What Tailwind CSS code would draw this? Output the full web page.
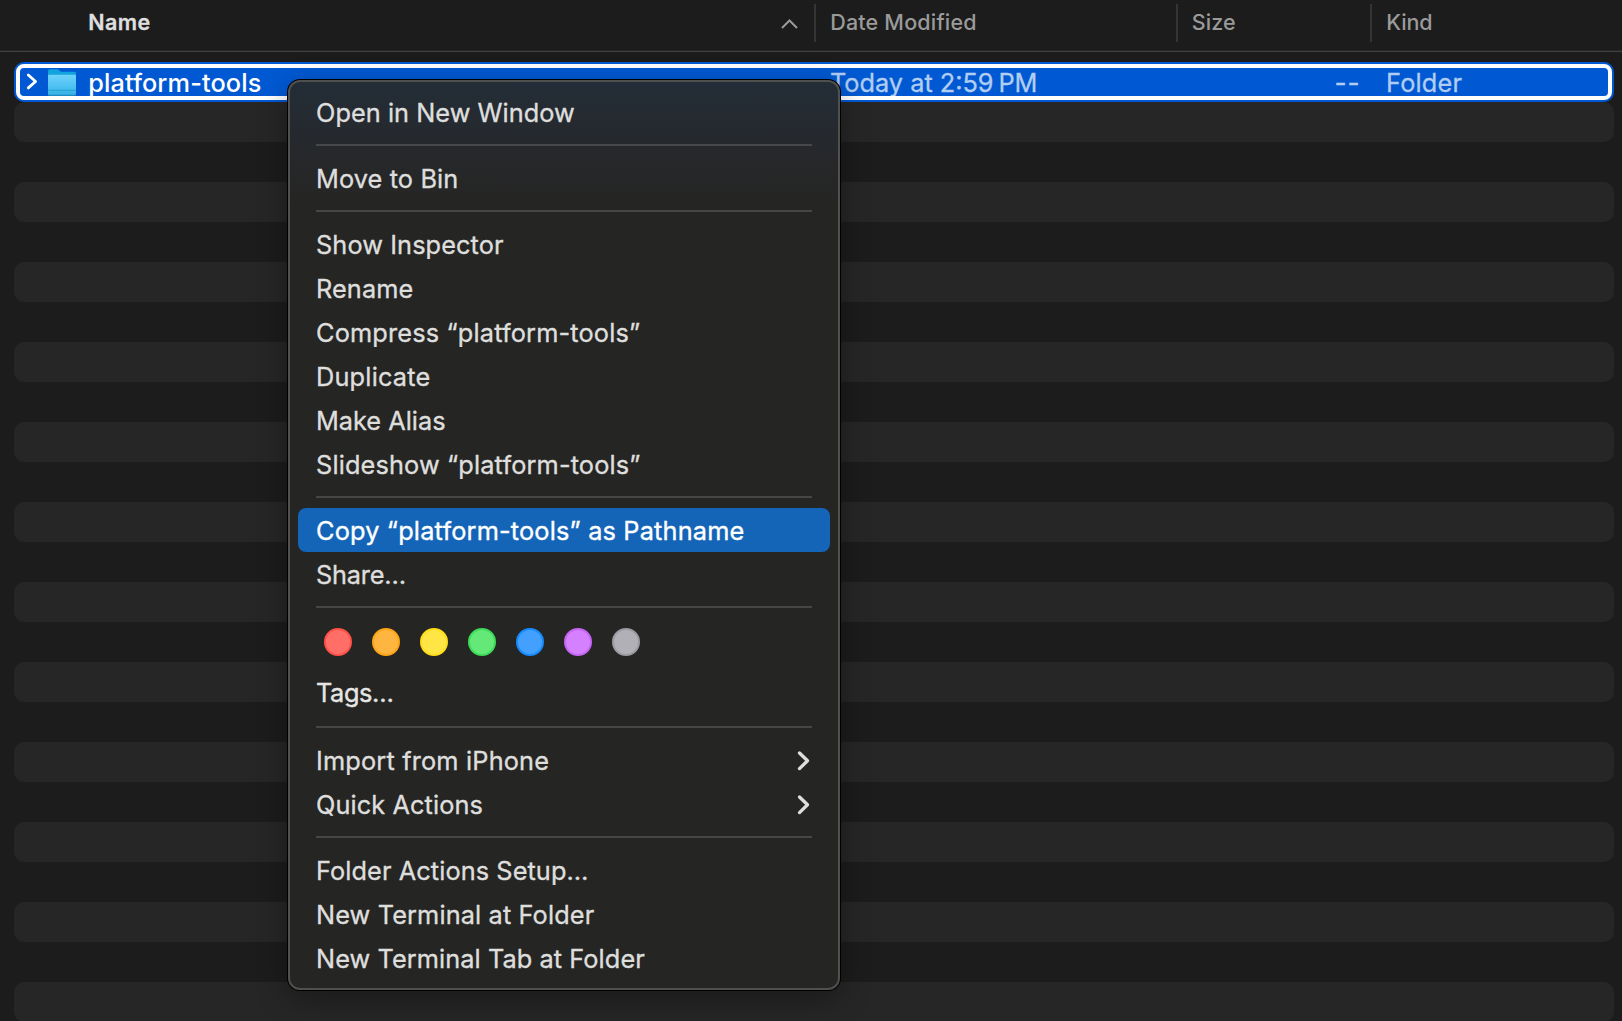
<!DOCTYPE html>
<html lang="en">
<head>
<meta charset="utf-8">
<title>Finder</title>
<script src="https://cdn.jsdelivr.net/npm/@tailwindcss/browser@4"></script>
</head>
<body class="relative h-[1021px] w-[1622px] overflow-hidden bg-[#1c1c1c] font-['Inter',sans-serif] whitespace-nowrap">

<!-- Column headers -->
<header class="flex h-[50px] text-[21.5px] leading-[44px] font-medium text-[#9a9a9a]">
  <div class="flex w-[814px] justify-between pl-[88.2px]">
    <span class="font-semibold tracking-[0.4px] text-[#dfdfdf] [-webkit-text-stroke:0.3px]">Name</span>
    <svg class="mt-[18px] mr-[16px] h-[12px] w-[18px]" viewBox="0 0 18 12" fill="none" stroke="#9a9a9a" stroke-width="2"><path d="M2 10 9.5 2.5 17 10"/></svg>
  </div>
  <div class="mt-1 h-[38px] w-[2px] bg-[#343434]"></div>
  <div class="w-[360px] pl-[14.2px] tracking-[0.19px]">Date Modified</div>
  <div class="mt-1 h-[38px] w-[2px] bg-[#343434]"></div>
  <div class="w-[192px] pl-[13.8px] tracking-[0.1px]">Size</div>
  <div class="mt-1 h-[38px] w-[2px] bg-[#343434]"></div>
  <div class="pl-[14.2px] tracking-[-0.1px]">Kind</div>
</header>
<div class="h-px bg-[#262626]"></div>
<div class="h-px bg-[#414141]"></div>

<!-- File list -->
<main class="mr-2 ml-[14px] pt-[10px]">
  <div class="relative flex h-10 rounded-[10px] bg-[#0059d3] text-[25.3px] leading-[41px] text-[#b2cdf2] [-webkit-text-stroke:0.3px]">
    <div class="flex w-[800px] text-white">
      <svg class="mt-[10px] ml-[11px] h-[19px] w-[14px]" viewBox="0 0 14 19" fill="none" stroke="#fff" stroke-width="2.8" stroke-linecap="round" stroke-linejoin="round"><path d="M3.3 3 10.6 9.5 3.3 15.9"/></svg>
      <svg class="mt-[6px] ml-[8px] h-[29px] w-[30px]" viewBox="0 0 30 29">
        <defs><linearGradient id="f" x1="0" y1="0" x2="0" y2="1"><stop offset="0" stop-color="#6fd2fb"/><stop offset="0.7" stop-color="#45bdf0"/><stop offset="1" stop-color="#36afe0"/></linearGradient></defs>
        <path d="M1 3Q1 1.3 2.7 1.3H10.2Q11.3 1.3 12.2 2.2L13 3.1Q13.7 3.7 14.7 3.7H27.5Q29 3.7 29 5.2V10H1Z" fill="#12a3dc"/>
        <path d="M1 7.5Q1 6.7 2 6.7H28Q29 6.7 29 7.5V26Q29 27.5 27.5 27.5H2.5Q1 27.5 1 26Z" fill="url(#f)"/>
        <path d="M1 22.3H29" stroke="#2a9fd0" stroke-width="1"/>
        <path d="M1.5 27.3H28.5" stroke="#1d8dc0" stroke-width="1"/>
      </svg>
      <span class="ml-[11.2px] font-medium tracking-[0.11px] [-webkit-text-stroke:0px]">platform-tools</span>
    </div>
    <div class="w-[362px] pl-[16px]">Today at 2:59&#8202;<span class="ml-[2.6px]">PM</span></div>
    <div class="w-[194px] pr-[9.5px] text-right tracking-[1.2px] [-webkit-text-stroke:0.6px]">--</div>
    <div class="pl-[16px] tracking-[0.2px]">Folder</div>
    <div class="absolute inset-[2px] rounded-[8px] border-4 border-white"></div>
  </div>
  <div class="flex flex-col gap-10">
    <div class="h-10 rounded-[10px] bg-[#262626]"></div>
    <div class="h-10 rounded-[10px] bg-[#262626]"></div>
    <div class="h-10 rounded-[10px] bg-[#262626]"></div>
    <div class="h-10 rounded-[10px] bg-[#262626]"></div>
    <div class="h-10 rounded-[10px] bg-[#262626]"></div>
    <div class="h-10 rounded-[10px] bg-[#262626]"></div>
    <div class="h-10 rounded-[10px] bg-[#262626]"></div>
    <div class="h-10 rounded-[10px] bg-[#262626]"></div>
    <div class="h-10 rounded-[10px] bg-[#262626]"></div>
    <div class="h-10 rounded-[10px] bg-[#262626]"></div>
    <div class="h-10 rounded-[10px] bg-[#262626]"></div>
    <div class="h-10 rounded-[10px] bg-[#262626]"></div>
  </div>
</main>

<!-- Context menu -->
<nav class="absolute top-[80px] left-[288px] h-[910px] w-[552px] rounded-[12px] border-2 border-[#50504f] bg-[#252523] bg-linear-to-b from-[#232d37] via-[#26282b] via-[70px] to-[#252523] to-[125px] px-2 py-2 text-[25.3px] leading-[45px] text-[#dededd] shadow-[0_0_0_1px_#000,0_8px_30px_rgba(0,0,0,0.35)] [-webkit-text-stroke:0.35px]">
  <div class="h-11 pl-[18px] tracking-[0.05px]">Open in New Window</div>
  <div class="flex h-[22px] items-center px-[18px]"><div class="h-[2px] w-full bg-[#47484a]"></div></div>
  <div class="h-11 pl-[18px] tracking-[0.12px]">Move to Bin</div>
  <div class="flex h-[22px] items-center px-[18px]"><div class="h-[2px] w-full bg-[#464646]"></div></div>
  <div class="h-11 pl-[18px] tracking-[0.1px]">Show Inspector</div>
  <div class="h-11 pl-[18px] tracking-[0.1px]">Rename</div>
  <div class="h-11 pl-[18px] tracking-[0.17px]">Compress “platform-tools”</div>
  <div class="h-11 pl-[18px] tracking-[0.2px]">Duplicate</div>
  <div class="h-11 pl-[18px] tracking-[0px]">Make Alias</div>
  <div class="h-11 pl-[18px] tracking-[0.15px]">Slideshow “platform-tools”</div>
  <div class="flex h-[22px] items-center px-[18px]"><div class="h-[2px] w-full bg-[#464645]"></div></div>
  <div class="h-11 rounded-[8px] bg-[#1464b8] pl-[18px] tracking-[0.18px] text-white">Copy “platform-tools” as Pathname</div>
  <div class="h-11 pl-[18px] tracking-[-0.2px]">Share…</div>
  <div class="flex h-[22px] items-center px-[18px]"><div class="h-[2px] w-full bg-[#464645]"></div></div>
  <div class="flex h-[52px] gap-5 pt-[10px] pl-[26px]">
    <div class="size-7 rounded-full border-2 border-[#ff5147] bg-[#ff6f67]"></div>
    <div class="size-7 rounded-full border-2 border-[#ffa415] bg-[#ffb641]"></div>
    <div class="size-7 rounded-full border-2 border-[#ffdc1c] bg-[#ffe644]"></div>
    <div class="size-7 rounded-full border-2 border-[#3cdc58] bg-[#64e978]"></div>
    <div class="size-7 rounded-full border-2 border-[#168bff] bg-[#43a0ff]"></div>
    <div class="size-7 rounded-full border-2 border-[#c664f6] bg-[#d581ff]"></div>
    <div class="size-7 rounded-full border-2 border-[#9c9ba1] bg-[#b1b0b6]"></div>
  </div>
  <div class="h-[46px] pl-[18px] tracking-[-0.4px] text-[#e6e6e5]">Tags…</div>
  <div class="flex h-[22px] items-center px-[18px]"><div class="h-[2px] w-full bg-[#464645]"></div></div>
  <div class="flex h-11 justify-between pr-[18px] pl-[18px] tracking-[0.18px]">Import from iPhone
    <svg class="mt-[11px] h-[24px] w-[18px]" viewBox="0 0 18 24" fill="none" stroke="#dededd" stroke-width="3.3" stroke-linecap="round" stroke-linejoin="round"><path d="M5.5 4 13.5 11.8 5.5 19.6"/></svg>
  </div>
  <div class="flex h-11 justify-between pr-[18px] pl-[18px] tracking-[0.1px]">Quick Actions
    <svg class="mt-[11px] h-[24px] w-[18px]" viewBox="0 0 18 24" fill="none" stroke="#dededd" stroke-width="3.3" stroke-linecap="round" stroke-linejoin="round"><path d="M5.5 4 13.5 11.8 5.5 19.6"/></svg>
  </div>
  <div class="flex h-[22px] items-center px-[18px]"><div class="h-[2px] w-full bg-[#464645]"></div></div>
  <div class="h-11 pl-[18px] tracking-[0.09px]">Folder Actions Setup…</div>
  <div class="h-11 pl-[18px] tracking-[0.13px]">New Terminal at Folder</div>
  <div class="h-11 pl-[18px] tracking-[0.08px]">New Terminal Tab at Folder</div>
</nav>
</body>
</html>
